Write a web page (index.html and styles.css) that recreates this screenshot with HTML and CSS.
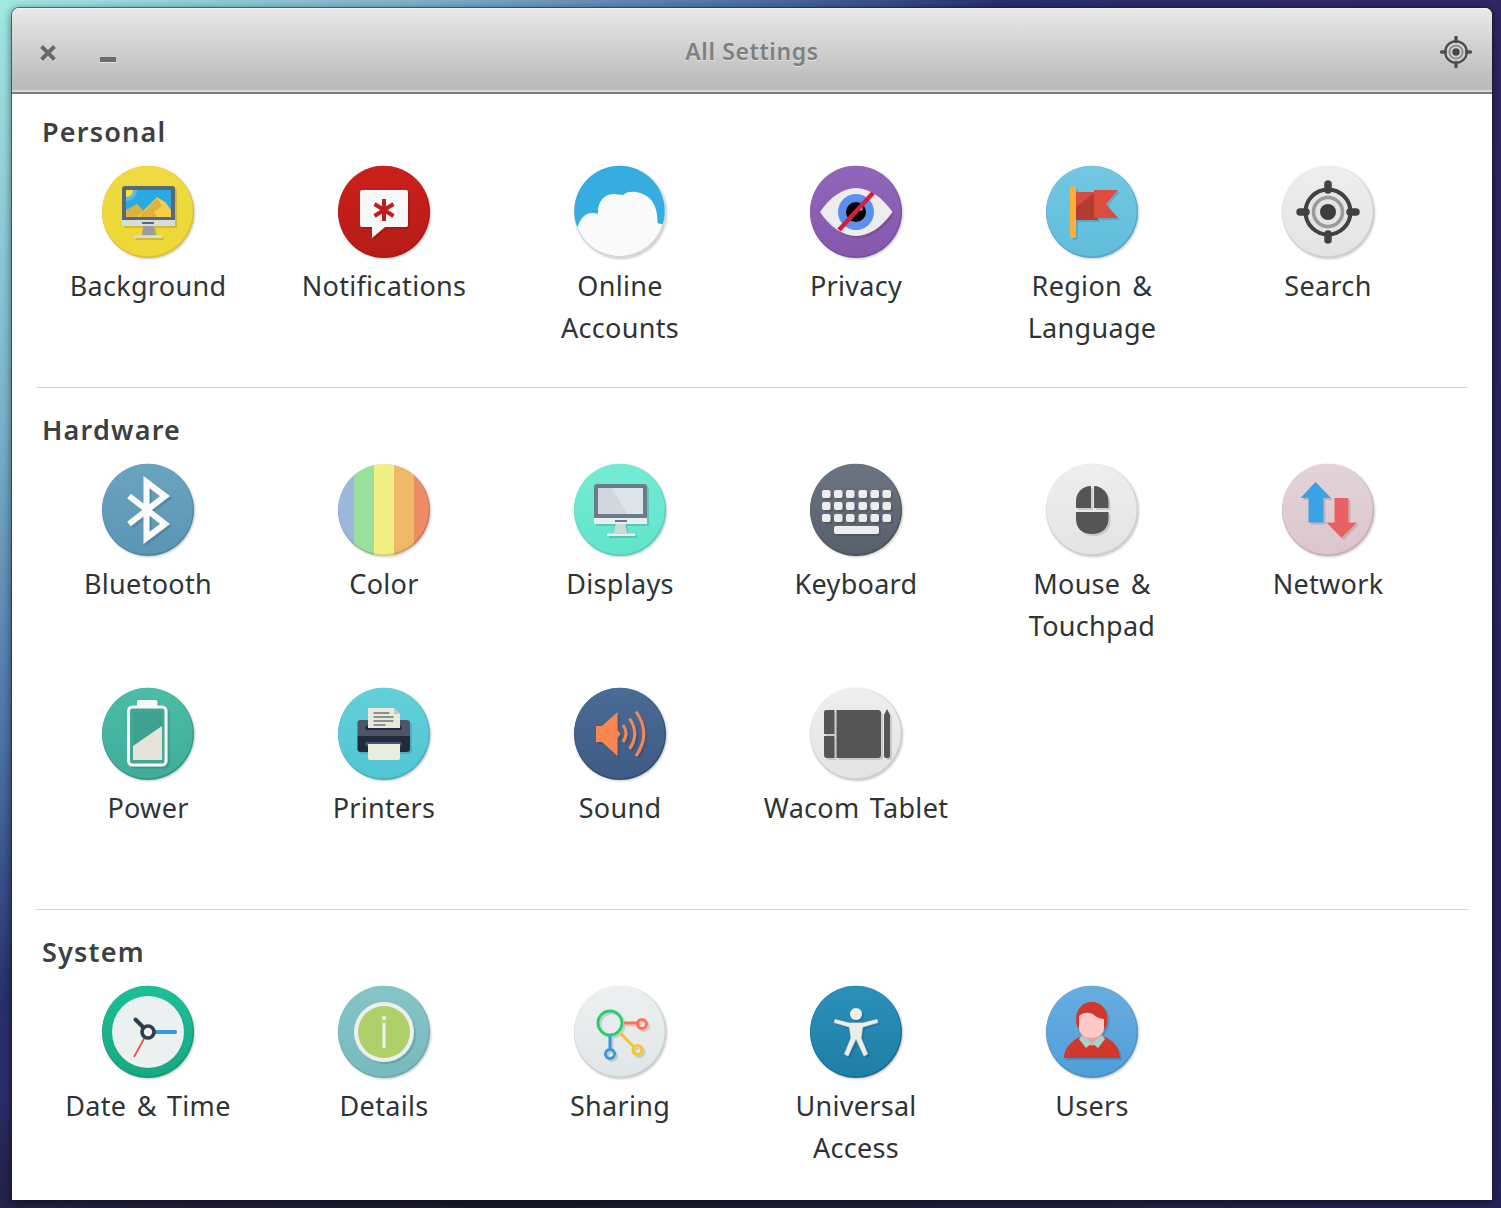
FILE: index.html
```html
<!DOCTYPE html>
<html lang="en">
<head>
<meta charset="utf-8">
<title>All Settings</title>
<link rel="stylesheet" href="styles.css">
</head>
<body>
<svg class="defs" width="0" height="0" aria-hidden="true">
  <defs>
    <clipPath id="disc"><circle cx="46" cy="46" r="46"/></clipPath>
    <clipPath id="top-disc"><circle cx="45.5" cy="45" r="45.2"/></clipPath>
    <filter id="gs" x="-20%" y="-20%" width="150%" height="150%"><feDropShadow dx="2" dy="2" stdDeviation="0.4" flood-color="#000" flood-opacity="0.13"/></filter>
    <linearGradient id="g-yellow" x1="0" y1="0" x2="0" y2="1"><stop offset="0" stop-color="#eed942"/><stop offset="1" stop-color="#edd835"/></linearGradient>
    <linearGradient id="g-red" x1="0" y1="0" x2="0" y2="1"><stop offset="0" stop-color="#cb201b"/><stop offset="1" stop-color="#b71c17"/></linearGradient>
    <linearGradient id="g-purple" x1="0" y1="0" x2="0" y2="1"><stop offset="0" stop-color="#9066bb"/><stop offset="1" stop-color="#8558ac"/></linearGradient>
    <linearGradient id="g-sky" x1="0" y1="0" x2="0" y2="1"><stop offset="0" stop-color="#72c7e2"/><stop offset="1" stop-color="#61bedb"/></linearGradient>
    <linearGradient id="g-grey" x1="0" y1="0" x2="0" y2="1"><stop offset="0" stop-color="#eeeeee"/><stop offset="1" stop-color="#e4e4e4"/></linearGradient>
    <linearGradient id="g-bt" x1="0" y1="0" x2="0" y2="1"><stop offset="0" stop-color="#6aa3be"/><stop offset="1" stop-color="#5a96b5"/></linearGradient>
    <linearGradient id="g-mint" x1="0" y1="0" x2="0" y2="1"><stop offset="0" stop-color="#74ebd3"/><stop offset="1" stop-color="#61e4cb"/></linearGradient>
    <linearGradient id="g-slate" x1="0" y1="0" x2="0" y2="1"><stop offset="0" stop-color="#6b7581"/><stop offset="1" stop-color="#56606b"/></linearGradient>
    <linearGradient id="g-pink" x1="0" y1="0" x2="0" y2="1"><stop offset="0" stop-color="#e3d4d9"/><stop offset="1" stop-color="#dbc6cd"/></linearGradient>
    <linearGradient id="g-teal" x1="0" y1="0" x2="0" y2="1"><stop offset="0" stop-color="#4bbca7"/><stop offset="1" stop-color="#3fad9a"/></linearGradient>
    <linearGradient id="g-cyan" x1="0" y1="0" x2="0" y2="1"><stop offset="0" stop-color="#61d0d9"/><stop offset="1" stop-color="#52c5d3"/></linearGradient>
    <linearGradient id="g-navy" x1="0" y1="0" x2="0" y2="1"><stop offset="0" stop-color="#4a6b94"/><stop offset="1" stop-color="#3f5b85"/></linearGradient>
    <linearGradient id="g-green" x1="0" y1="0" x2="0" y2="1"><stop offset="0" stop-color="#1cbf97"/><stop offset="1" stop-color="#17a883"/></linearGradient>
    <linearGradient id="g-info" x1="0" y1="0" x2="0" y2="1"><stop offset="0" stop-color="#84c4c7"/><stop offset="1" stop-color="#77bbbf"/></linearGradient>
    <linearGradient id="g-share" x1="0" y1="0" x2="0" y2="1"><stop offset="0" stop-color="#edf0f1"/><stop offset="1" stop-color="#e0e6e7"/></linearGradient>
    <linearGradient id="g-access" x1="0" y1="0" x2="0" y2="1"><stop offset="0" stop-color="#2b90b9"/><stop offset="1" stop-color="#1f7ea8"/></linearGradient>
    <linearGradient id="g-users" x1="0" y1="0" x2="0" y2="1"><stop offset="0" stop-color="#68addf"/><stop offset="1" stop-color="#519ed9"/></linearGradient>
  </defs>
</svg>

<main class="window">
  <header class="titlebar">
    <div class="wm-buttons">
      <svg class="wm-close" width="18" height="18" viewBox="0 0 18 18"><path class="wm-light" d="M2.5 3.5 15.5 16.500M15.500 3.500 2.500 16.500"/><path class="wm-dark" d="M2.500 2.500 15.500 15.500M15.500 2.500 2.500 15.500"/></svg>
      <svg class="wm-min" width="18" height="8" viewBox="0 0 18 8"><rect class="wm-min-light" x="1" y="3" width="16" height="5"/><rect class="wm-min-dark" x="1" y="2" width="16" height="5"/></svg>
    </div>
    <h1 class="title">All Settings</h1>
    <svg class="search-btn" width="34" height="34" viewBox="0 0 34 34">
      <g stroke="#fff" stroke-opacity=".35" fill="none" transform="translate(0 1)"><circle cx="17" cy="17" r="10.800" stroke-width="2.400"/></g>
      <circle cx="17" cy="17" r="10.800" fill="#dcdcdc" fill-opacity=".5" stroke="#4e4e4e" stroke-width="2.400"/>
      <circle cx="17" cy="17" r="6.600" fill="none" stroke="#8e8e8e" stroke-width="2"/>
      <circle cx="17" cy="17" r="3.700" fill="#484848"/>
      <path d="M17 2.500V6.500M17 27.500V31.500M2.500 17H6.500M27.500 17H31.500" stroke="#4e4e4e" stroke-width="3.500" stroke-linecap="round"/>
    </svg>
  </header>

  <section class="section">
    <h2 class="heading">Personal</h2>
    <div class="grid">
      <a class="item"><svg class="icon" viewBox="0 0 92 92"><circle cx="46" cy="46" r="46" fill="#d7c22f"/><circle cx="45.500" cy="45" r="45.200" fill="url(#g-yellow)"/>
        <g filter="url(#gs)">
          <path d="M20 23q0-3 3-3H70q3 0 3 3V54H20z" fill="#546a75"/>
          <rect x="24" y="24" width="45" height="27" fill="#2aaae2"/>
          <path d="M24 24h11a11 11 0 0 1-11 11z" fill="#57bce8"/>
          <path d="M24 24h7a7 7 0 0 1-7 7z" fill="#f6e732"/>
          <path d="M24 47 34 41 41 45 55 31 63 36 69 44V51H24z" fill="#f6cf4a"/>
          <path d="M24 44 35 38 42 45 35 51H24z" fill="#ddb142"/>
          <path d="M37 51 55 32 60 40 52 46 55 51z" fill="#ddb142"/>
          <path d="M20 54H73V60H20z" fill="#d9dcdf"/>
          <rect x="40" y="56" width="12" height="2" fill="#546a75"/>
          <path d="M41 60H52L53 69H40z" fill="#9c9c9e"/>
          <rect x="32" y="69.500" width="28" height="2.500" fill="#d9dcdf"/>
        </g></svg><span class="label">Background</span></a>
      <a class="item"><svg class="icon" viewBox="0 0 92 92"><circle cx="46" cy="46" r="46" fill="#aa1a15"/><circle cx="45.500" cy="45" r="45.200" fill="url(#g-red)"/>
        <g filter="url(#gs)">
          <path d="M24 24H68q2 0 2 2V59q0 2-2 2H47L34 72V61H24q-2 0-2-2V26q0-2 2-2z" fill="#f8f8f8"/>
          <path d="M46 33V55M36.500 38 55.500 50M55.500 38 36.500 50" stroke="#c01f1a" stroke-width="4" fill="none"/>
        </g></svg><span class="label">Notifications</span></a>
      <a class="item"><svg class="icon" viewBox="0 0 92 92"><circle cx="46" cy="46" r="46" fill="#d8d8d8"/><circle cx="45.500" cy="45" r="45.200" fill="#35ade0"/>
        <g clip-path="url(#top-disc)">
          <path d="M0 62 4 60C7 51 12 47 18 47 20 47 23 47 24 48 23 36 30 28 40 28 43 28 46 29 49 29 52 26 57 25 62 26 74 28 84 36 83.500 57 86 58 90 59 94 59V96H0z" fill="#fafafa"/>
        </g></svg><span class="label">Online<br>Accounts</span></a>
      <a class="item"><svg class="icon" viewBox="0 0 92 92"><circle cx="46" cy="46" r="46" fill="#7a4fa3"/><circle cx="45.500" cy="45" r="45.200" fill="url(#g-purple)"/>
        <g filter="url(#gs)">
          <path d="M10 46C20 31 33 22 46 22S72 31 82.500 46C72 61 59 70 46 70S20 61 10 46z" fill="#ececec"/>
          <circle cx="46" cy="46" r="18" fill="#5b90ef"/>
          <circle cx="46" cy="46" r="10" fill="#050505"/>
          <circle cx="50" cy="42" r="2.500" fill="#fff"/>
          <path d="M63 27 29 64" stroke="#d81e3c" stroke-width="4.500"/>
        </g></svg><span class="label">Privacy</span></a>
      <a class="item"><svg class="icon" viewBox="0 0 92 92"><circle cx="46" cy="46" r="46" fill="#56a8c4"/><circle cx="45.500" cy="45" r="45.200" fill="url(#g-sky)"/>
        <g filter="url(#gs)">
          <rect x="24" y="20" width="6" height="52" rx="3" fill="#fbb03b"/>
          <path d="M30 26H52V54H30z" fill="#d84b40"/>
          <path d="M30 41 48 27 52 54H30z" fill="#b33c30"/>
          <path d="M48 24H72L60 38 72 52H48z" fill="#e04c40"/>
        </g></svg><span class="label">Region &amp;<br>Language</span></a>
      <a class="item"><svg class="icon" viewBox="0 0 92 92"><circle cx="46" cy="46" r="46" fill="#cfcfcf"/><circle cx="45.500" cy="45" r="45.200" fill="url(#g-grey)"/>
        <circle cx="46" cy="46" r="22.500" fill="#e4e4e4" stroke="#414141" stroke-width="4"/>
        <circle cx="46" cy="46" r="14.500" fill="none" stroke="#9a9a9a" stroke-width="3.500"/>
        <circle cx="46" cy="46" r="8" fill="#3e3e3e"/>
        <path d="M46 18V24M46 68V74M18 46H24M68 46H74" stroke="#414141" stroke-width="7.500" stroke-linecap="round"/>
      </svg><span class="label">Search</span></a>
    </div>
  </section>

  <section class="section">
    <h2 class="heading">Hardware</h2>
    <div class="grid">
      <a class="item"><svg class="icon" viewBox="0 0 92 92"><circle cx="46" cy="46" r="46" fill="#4f88a5"/><circle cx="45.500" cy="45" r="45.200" fill="url(#g-bt)"/>
        <path filter="url(#gs)" d="M27 32 63 60 44.500 74V18L63 32 27 60" fill="none" stroke="#fafafa" stroke-width="6"/></svg><span class="label">Bluetooth</span></a>
      <a class="item"><svg class="icon" viewBox="0 0 92 92"><g clip-path="url(#disc)">
          <rect x="0" width="18" height="92" fill="#9bb8dc"/><rect x="16" width="21" height="92" fill="#9bdf9f"/><rect x="36" width="21" height="92" fill="#f3f083"/><rect x="56" width="21" height="92" fill="#edb868"/><rect x="76" width="16" height="92" fill="#ec8c66"/>
          <path d="M0 0H92V92H0zM90.700 45A45.200 45.200 0 1 0 0.300 45 45.200 45.200 0 1 0 90.700 45z" fill="#000" fill-opacity=".13" fill-rule="evenodd"/>
        </g></svg><span class="label">Color</span></a>
      <a class="item"><svg class="icon" viewBox="0 0 92 92"><circle cx="46" cy="46" r="46" fill="#53d2ba"/><circle cx="45.500" cy="45" r="45.200" fill="url(#g-mint)"/>
        <g filter="url(#gs)">
          <path d="M20 23q0-3 3-3H70q3 0 3 3V54H20z" fill="#6a7b8b"/>
          <rect x="24" y="24" width="45" height="26" fill="#dde5eb"/>
          <path d="M24 24H38L53 50H24z" fill="#d1d6df"/>
          <path d="M20 54H73V60H20z" fill="#e8efef"/>
          <rect x="41" y="56" width="12" height="2" fill="#6a7b8b"/>
          <path d="M42 60H51L53 69H40z" fill="#cfd9d7"/>
          <rect x="33" y="69.500" width="28" height="2.500" fill="#e8efef"/>
        </g></svg><span class="label">Displays</span></a>
      <a class="item"><svg class="icon" viewBox="0 0 92 92"><circle cx="46" cy="46" r="46" fill="#4c555f"/><circle cx="45.500" cy="45" r="45.200" fill="url(#g-slate)"/>
        <g filter="url(#gs)" fill="#ededed">
          <rect x="12" y="26" width="8.500" height="8" rx="2"/><rect x="24" y="26" width="8.500" height="8" rx="2"/><rect x="36" y="26" width="8.500" height="8" rx="2"/><rect x="48.500" y="26" width="8.500" height="8" rx="2"/><rect x="60.500" y="26" width="8.500" height="8" rx="2"/><rect x="72.500" y="26" width="8.500" height="8" rx="2"/>
          <rect x="12" y="38" width="8.500" height="8" rx="2"/><rect x="24" y="38" width="8.500" height="8" rx="2"/><rect x="36" y="38" width="8.500" height="8" rx="2"/><rect x="48.500" y="38" width="8.500" height="8" rx="2"/><rect x="60.500" y="38" width="8.500" height="8" rx="2"/><rect x="72.500" y="38" width="8.500" height="8" rx="2"/>
          <rect x="12" y="50" width="8.500" height="8" rx="2"/><rect x="24" y="50" width="8.500" height="8" rx="2"/><rect x="36" y="50" width="8.500" height="8" rx="2"/><rect x="48.500" y="50" width="8.500" height="8" rx="2"/><rect x="60.500" y="50" width="8.500" height="8" rx="2"/><rect x="72.500" y="50" width="8.500" height="8" rx="2"/>
          <rect x="24" y="62" width="45" height="8" rx="2"/>
        </g></svg><span class="label">Keyboard</span></a>
      <a class="item"><svg class="icon" viewBox="0 0 92 92"><circle cx="46" cy="46" r="46" fill="#cfcfcf"/><circle cx="45.500" cy="45" r="45.200" fill="url(#g-grey)"/>
        <g filter="url(#gs)" fill="#545454">
          <path d="M45 22V44H30V37C30 29 36 22 45 22z"/>
          <path d="M48 22C56 22 62.500 29 62.500 37V44H48z"/>
          <path d="M30 48H62.500V55C62.500 64 56 70 46 70S30 64 30 55z"/>
        </g></svg><span class="label">Mouse &amp;<br>Touchpad</span></a>
      <a class="item"><svg class="icon" viewBox="0 0 92 92"><circle cx="46" cy="46" r="46" fill="#c7b0b8"/><circle cx="45.500" cy="45" r="45.200" fill="url(#g-pink)"/>
        <g filter="url(#gs)">
          <path d="M33.500 18 49 34H41.500V58.500H26.500V34H18.500z" fill="#3aa3e3"/>
          <path d="M52.500 34H66.500V58.500H75L59.500 74 44.500 58.500H52.500z" fill="#e96264"/>
        </g></svg><span class="label">Network</span></a>
      <a class="item"><svg class="icon" viewBox="0 0 92 92"><circle cx="46" cy="46" r="46" fill="#379684"/><circle cx="45.500" cy="45" r="45.200" fill="url(#g-teal)"/>
        <g filter="url(#gs)">
          <path d="M35 14q0-2 2-2H53.500q2 0 2 2V18H35z" fill="#f8f8f8"/>
          <rect x="26.500" y="19" width="37.500" height="58" rx="4" fill="#3fa893" stroke="#f8f8f8" stroke-width="3"/>
        </g>
        <rect x="31" y="24" width="29" height="48" fill="#3ea08f"/>
        <path d="M31 58 60 38V72H31z" fill="#e4e4d8"/></svg><span class="label">Power</span></a>
      <a class="item"><svg class="icon" viewBox="0 0 92 92"><circle cx="46" cy="46" r="46" fill="#46b3c0"/><circle cx="45.500" cy="45" r="45.200" fill="url(#g-cyan)"/>
        <g transform="translate(-1.500 0)">
        <g filter="url(#gs)">
          <path d="M21 35q0-3 3-3H70.500q3 0 3 3V48H21z" fill="#4e5568"/>
          <path d="M21 48H73.500V61q0 3-3 3H24q-3 0-3-3z" fill="#222b3c"/>
          <rect x="29" y="38" width="36" height="4" fill="#222b3c"/>
          <rect x="29" y="54" width="36" height="4" fill="#4e5568"/>
        </g>
        <path d="M31.500 20H57.500L63.500 26V40H31.500z" fill="#e9e9dc"/>
        <path d="M57.500 20 63.500 26H57.500z" fill="#c8c8bc"/>
        <path d="M37 25H53M37 29H57M37 33H57M37 37H49" stroke="#8d8f92" stroke-width="2"/>
        <path d="M31.500 56H63.500V70q0 2-2 2H33.500q-2 0-2-2z" fill="#e9ecdf"/>
        </g></svg><span class="label">Printers</span></a>
      <a class="item"><svg class="icon" viewBox="0 0 92 92"><circle cx="46" cy="46" r="46" fill="#364e74"/><circle cx="45.500" cy="45" r="45.200" fill="url(#g-navy)"/>
        <g filter="url(#gs)">
          <path d="M22 38H28L43.500 24V42L46.500 46 43.500 50V68L28 54H22z" fill="#f98550"/>
          <path d="M49 37Q55 45.500 49 54" fill="none" stroke="#f98550" stroke-width="3"/>
          <path d="M55.500 30.500Q66 45.500 55.500 61" fill="none" stroke="#f98550" stroke-width="3"/>
          <path d="M62 23.500Q77.500 45.500 62 68" fill="none" stroke="#f98550" stroke-width="3"/>
        </g></svg><span class="label">Sound</span></a>
      <a class="item"><svg class="icon" viewBox="0 0 92 92"><circle cx="46" cy="46" r="46" fill="#cfcfcf"/><circle cx="45.500" cy="45" r="45.200" fill="url(#g-grey)"/>
        <g filter="url(#gs)" fill="#555">
          <path d="M16 22H24.500V46H14V24q0-2 2-2z"/>
          <path d="M14 48H24.500V70H17q-3 0-3-3z"/>
          <path d="M26.500 22H68q3 0 3 3V67q0 3-3 3H26.500z"/>
          <path d="M74 27 77 21 80 27V68q0 2-2 2H76q-2 0-2-2z"/>
        </g></svg><span class="label">Wacom Tablet</span></a>
    </div>
  </section>

  <section class="section">
    <h2 class="heading">System</h2>
    <div class="grid">
      <a class="item"><svg class="icon" viewBox="0 0 92 92"><circle cx="46" cy="46" r="46" fill="#149a78"/><circle cx="45.500" cy="45" r="45.200" fill="url(#g-green)"/>
        <circle cx="46" cy="46" r="36" fill="#ecf0f1"/>
        <path d="M43.500 50 32 71" stroke="#e74c3c" stroke-width="1.600"/>
        <path d="M51 46H73" stroke="#3498db" stroke-width="4" stroke-linecap="round"/>
        <path d="M41 41 33.500 33.500" stroke="#2c3e50" stroke-width="4" stroke-linecap="round"/>
        <circle cx="46" cy="46" r="6" fill="#ecf0f1" stroke="#2c3e50" stroke-width="3.600"/></svg><span class="label">Date &amp; Time</span></a>
      <a class="item"><svg class="icon" viewBox="0 0 92 92"><circle cx="46" cy="46" r="46" fill="#6cabaf"/><circle cx="45.500" cy="45" r="45.200" fill="url(#g-info)"/>
        <circle filter="url(#gs)" cx="46" cy="46" r="30" fill="#eeeeee"/>
        <circle cx="46" cy="46" r="26" fill="#aecf6a"/>
        <circle cx="46" cy="32" r="2.200" fill="#efefef"/>
        <rect x="44.500" y="37" width="3" height="25" fill="#efefef"/></svg><span class="label">Details</span></a>
      <a class="item"><svg class="icon" viewBox="0 0 92 92"><circle cx="46" cy="46" r="46" fill="#cbd1d3"/><circle cx="45.500" cy="45" r="45.200" fill="url(#g-share)"/>
        <g filter="url(#gs)" fill="none" stroke-width="3">
          <path d="M50 37H64" stroke="#ff7256"/><circle cx="68" cy="38" r="4.500" stroke="#ff7256"/>
          <path d="M46 47 60 61" stroke="#f4c430"/><circle cx="63.500" cy="64" r="4.500" stroke="#f4c430"/>
          <path d="M36 49V64" stroke="#3498db"/><circle cx="36" cy="68" r="4.500" stroke="#3498db"/>
          <circle cx="36" cy="37" r="12" stroke="#2ecc71"/>
        </g></svg><span class="label">Sharing</span></a>
      <a class="item"><svg class="icon" viewBox="0 0 92 92"><circle cx="46" cy="46" r="46" fill="#1a6f95"/><circle cx="45.500" cy="45" r="45.200" fill="url(#g-access)"/>
        <g filter="url(#gs)" fill="#f0ece6">
          <circle cx="46" cy="28" r="6"/>
          <path d="M25 33.500 39 37H53L67 33.500 67.800 36.500 52.500 41 51 52 57.500 68 54 70 46 52.500 38 70 34.500 68 41 52 39.500 41 24.200 36.500z" stroke="#f0ece6" stroke-width=".6" stroke-linejoin="round"/>
        </g></svg><span class="label">Universal<br>Access</span></a>
      <a class="item"><svg class="icon" viewBox="0 0 92 92"><circle cx="46" cy="46" r="46" fill="#4a92c9"/><circle cx="45.500" cy="45" r="45.200" fill="url(#g-users)"/>
        <g filter="url(#gs)">
          <path d="M18 72C18 60 30 52 36 50L46 58 56 50C64 52 74 60 74 72z" fill="#d0382e"/>
          <path d="M38 46H54V55L46 60 38 55z" fill="#e5a3a3"/>
          <path d="M36 49 46 57 40 62 33 53zM56 49 46 57 52 62 59 53z" fill="#a9d2cb"/>
          <path d="M45.500 16C56 16 61.500 24 61.500 33 61.500 38 60 42 57 45H34C31 42 30 38 30 33 30 24 36 16 45.500 16z" fill="#d0382e"/>
          <path d="M33 30C38 26 44 26 48 29 52 32 55 33 58 33V42C58 48 52 52 45.500 52S33 48 33 42z" fill="#ffc9c9"/>
        </g></svg><span class="label">Users</span></a>
    </div>
  </section>
</main>
</body>
</html>
```
FILE: styles.css
```css
* {
  box-sizing: border-box;
}

html,
body {
  height: 100%;
  margin: 0;
}

body {
  overflow: hidden;
  padding: 8px 9px 8px 12px;
  background:
    radial-gradient(ellipse 1000px 130px at 520px 100%, #1b1b27 0%, rgba(27, 27, 39, 0) 100%),
    linear-gradient(135deg, #a2e9e3 0%, #7db5cd 15%, #4a6fa5 28%, #27306f 37%, #332663 52%, #2a2560 75%, #25245a 100%);
  font-family: "Noto Sans", "Open Sans", sans-serif;
}

.defs {
  position: absolute;
}

.window {
  display: flex;
  flex-direction: column;
  height: 1192px;
  background: #fff;
  border-radius: 7px 7px 0 0;
  box-shadow: 0 0 0 1px rgba(20, 30, 50, 0.5), 0 2px 10px rgba(0, 0, 0, 0.6);
  overflow: hidden;
}

.titlebar {
  position: relative;
  display: flex;
  flex: none;
  align-items: center;
  justify-content: center;
  height: 86px;
  background: linear-gradient(#e8e8e8, #b9b9b9 96%);
  border-top: 1px solid #f2f2f2;
  border-bottom: 2px solid #7c7c7c;
  box-shadow: inset 0 -2px 0 #d8d8d8;
}

.wm-buttons {
  position: absolute;
  left: 27px;
  top: 33px;
  display: flex;
  align-items: center;
  gap: 42px;
}

.wm-close {
  display: block;
  fill: none;
}

.wm-dark {
  stroke: #686868;
  stroke-width: 4;
}

.wm-light {
  stroke: #e6e6e6;
  stroke-width: 4;
}

.wm-min {
  display: block;
  margin-top: 13px;
}

.wm-min-dark {
  fill: #6c6c6c;
}

.wm-min-light {
  fill: #e4e4e4;
}

.title {
  margin: 0;
  color: #7f7f7f;
  font-size: 23px;
  font-weight: 600;
  letter-spacing: 0.6px;
  text-shadow: 0 1px 0 #e4e4e4;
}

.search-btn {
  position: absolute;
  right: 19px;
  top: 26px;
}

.section {
  margin: 0 24px;
  padding-top: 24px;
  border-top: 1px solid #d2d2d2;
}

.titlebar + .section {
  padding-top: 20px;
  border-top: 0;
}

.heading {
  margin: 0 0 16px 6px;
  color: #3d3f40;
  font-size: 27px;
  font-weight: 600;
  line-height: 36px;
  letter-spacing: 1.2px;
}

.grid {
  display: grid;
  grid-template-columns: repeat(6, 236px);
  grid-auto-rows: 221px;
  row-gap: 3px;
  margin-left: -6px;
}

.item {
  display: flex;
  flex-direction: column;
  align-items: center;
}

.icon {
  display: block;
  flex: none;
  width: 92px;
  height: 92px;
  overflow: visible;
  filter: drop-shadow(1px 1px 1px rgba(0, 0, 0, 0.22));
}

.label {
  margin-top: 7px;
  color: #2e3436;
  font-size: 27px;
  line-height: 42px;
  letter-spacing: 0.3px;
  word-spacing: 3px;
  text-align: center;
}
```
